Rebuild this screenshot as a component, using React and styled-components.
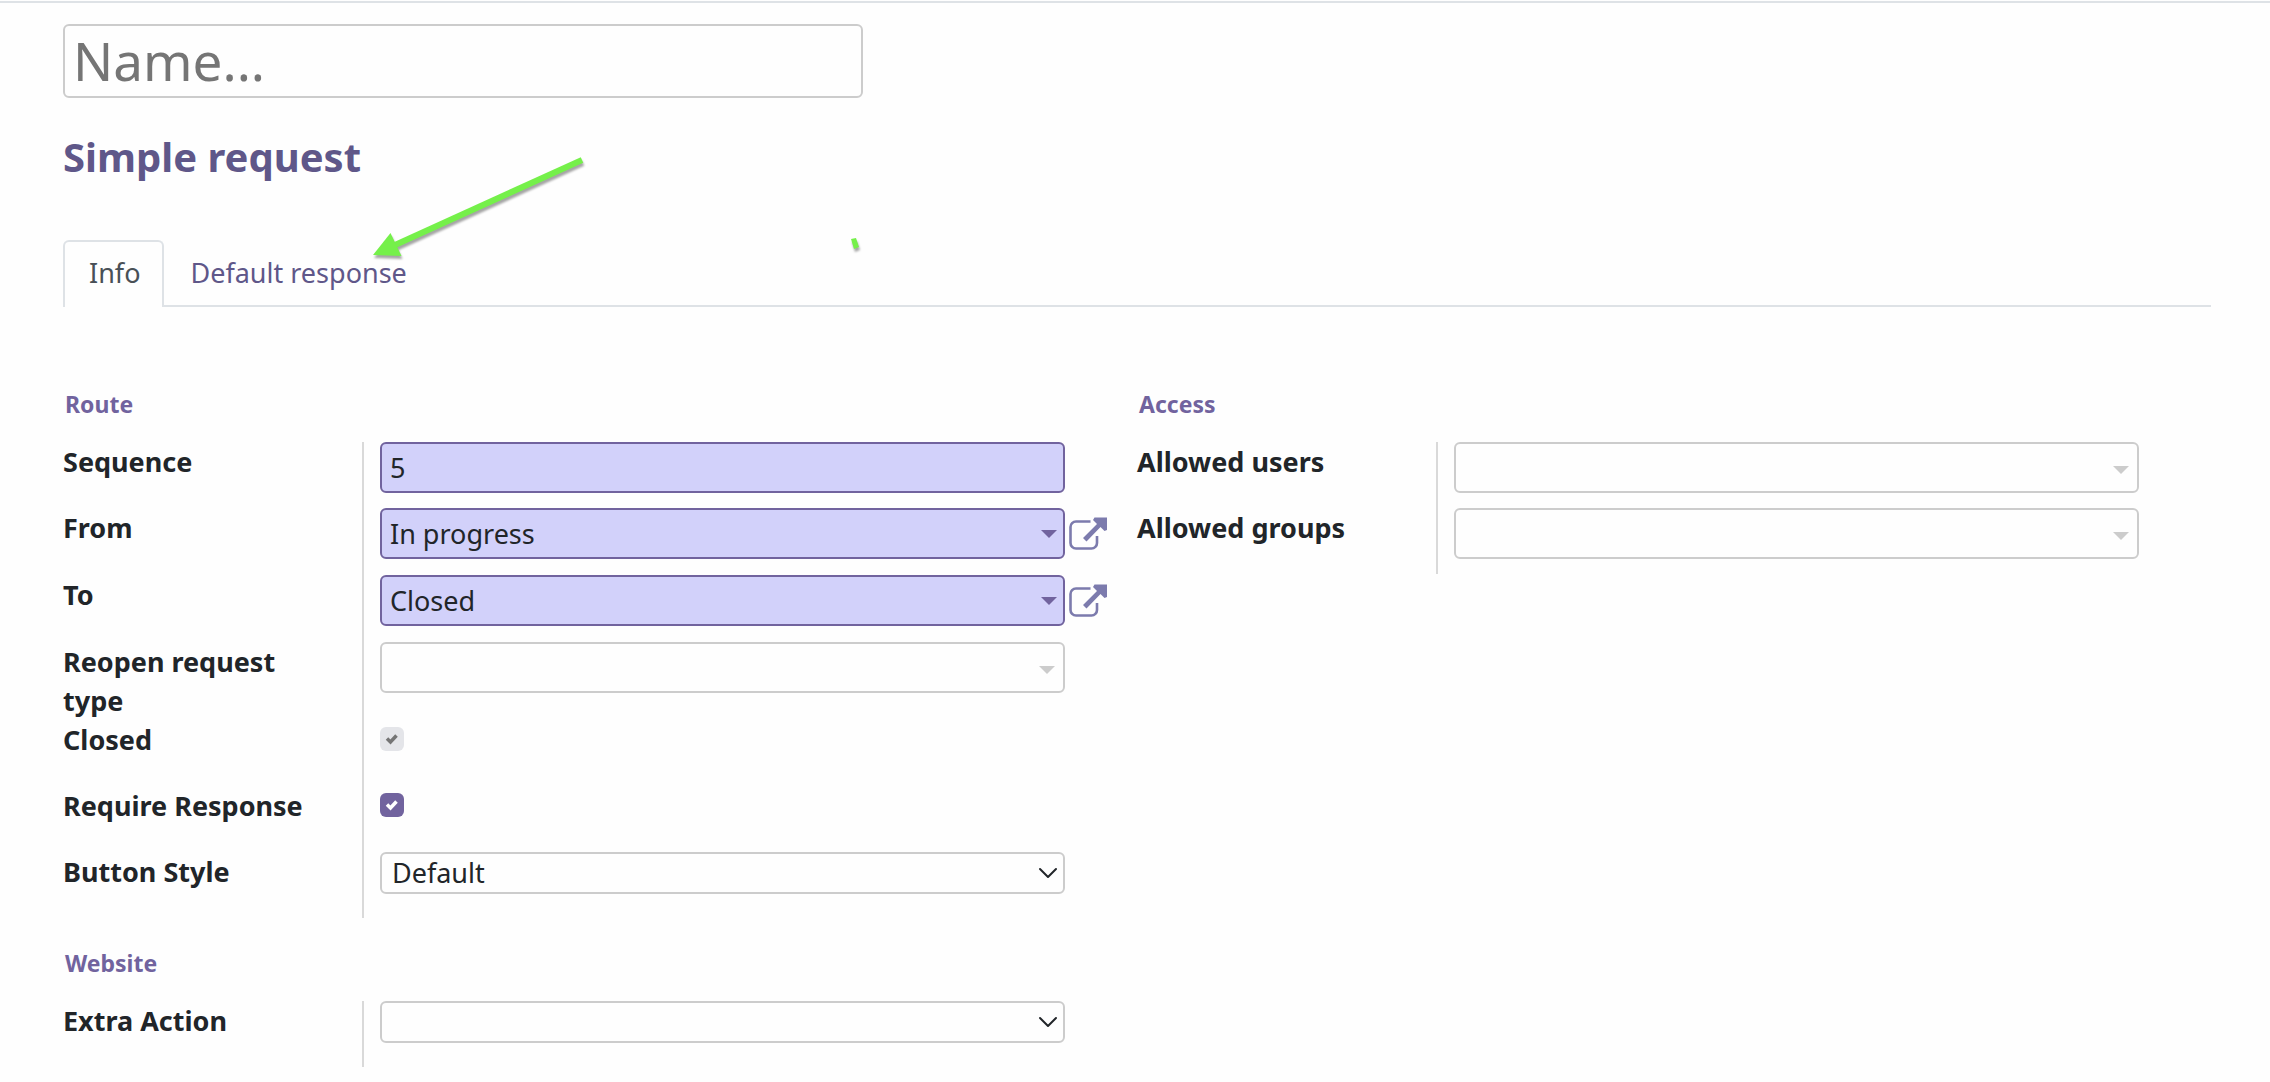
import React from "react";
import styled, { createGlobalStyle, css } from "styled-components";

const GlobalStyle = createGlobalStyle`
    body {
        margin: 0;
        padding-top: 1px;
        background: #fefefe;
        color: #212529;
        font-family: "Lucida Grande", "Noto Sans", "Open Sans", sans-serif;
        font-size: 27px;
        line-height: 39px;
    }

    *, *::before, *::after {
        box-sizing: border-box;
    }
`;

const Sheet = styled.main`
    position: relative;
    padding: 21px 59px 0 63px;
    border-top: 2px solid #dee2e6;
`;

const NameInput = styled.input`
    display: block;
    width: 800px;
    max-width: 100%;
    height: 74px;
    padding: 0 8px 2px;
    border: 2px solid #ccc;
    border-radius: 6px;
    background: #fefefe;
    color: #212529;
    font-family: inherit;
    font-size: 53px;

    &::placeholder {
        color: #757575;
        opacity: 1;
    }
`;

const Title = styled.h1`
    margin: 29px 0 53px;
    color: #5f5789;
    font-size: 40px;
    line-height: 60px;
    font-weight: bold;
`;

const Tabs = styled.nav`
    display: flex;
    border-bottom: 2px solid #dee2e6;
`;

const Tab = styled.a`
    height: 67px;
    margin-bottom: -2px;
    padding: 11px 23px 0 24px;
    border: 2px solid transparent;
    border-bottom: 0;
    border-radius: 6px 6px 0 0;
    color: #5f5789;
    text-decoration: none;

    ${({ $active }) => $active && css`
        padding-right: 22px;
        border-color: #dee2e6;
        background: #fefefe;
        color: #495057;
    `}
`;

const Columns = styled.div`
    display: grid;
    grid-template-columns: 1fr 1fr;
    padding-top: 78px;
`;

const Group = styled.section`
    & + & {
        margin-top: 26px;
    }
`;

const GroupTitle = styled.h2`
    margin: 0 0 18px;
    padding-left: 2px;
    color: #71639e;
    font-size: 23px;
    line-height: 39px;
    font-weight: bold;
`;

const Row = styled.div`
    display: grid;
    grid-template-columns: 299px 1fr;
`;

const Label = styled.label`
    padding-right: 40px;
    font-weight: bold;
`;

const Cell = styled.div`
    display: flex;
    align-items: flex-start;
    min-height: ${({ $linked }) => ($linked ? "67px" : "66px")};
    padding: 0 28px 15px 16px;
    border-left: 2px solid #d9d9d9;
`;

const Box = styled.div`
    position: relative;
    flex: 1;
    margin-right: ${({ $linked }) => ($linked ? "4px" : "44px")};
`;

const Field = styled.input`
    display: block;
    width: 100%;
    height: 51px;
    padding: 0 8px;
    border: 2px solid ${({ $required }) => ($required ? "#71639e" : "#ccc")};
    border-radius: 6px;
    background: ${({ $required }) => ($required ? "#d2d1fa" : "#fefefe")};
    color: #212529;
    font: inherit;
`;

const Caret = styled.span`
    position: absolute;
    top: ${({ $required }) => ($required ? "22px" : "24px")};
    right: ${({ $required }) => ($required ? "8px" : "10px")};
    border: 8px solid transparent;
    border-top-color: ${({ $required }) => ($required ? "#71639e" : "#ccc")};
    border-bottom: 0;
    pointer-events: none;
`;

const LinkButton = styled.button`
    width: 40px;
    height: 34px;
    margin-top: 9px;
    padding: 0;
    border: 0;
    background: none;
    color: #7c7bad;
    cursor: pointer;

    svg {
        display: block;
    }
`;

const Select = styled.select`
    display: block;
    width: 100%;
    height: 42px;
    padding: 0 10px;
    border: 2px solid #ccc;
    border-radius: 6px;
    background: #fefefe;
    color: #212529;
    font: inherit;
    line-height: 38px;
    appearance: none;
`;

const Chevron = styled.svg`
    position: absolute;
    top: 14px;
    right: 7px;
    pointer-events: none;
`;

const Check = styled.span`
    display: grid;
    margin-top: 7px;

    > * {
        grid-area: 1 / 1;
    }

    svg {
        pointer-events: none;
    }
`;

const CheckInput = styled.input`
    width: 24px;
    height: 24px;
    margin: 0;
    border-radius: 6px;
    background: #71639e;
    appearance: none;

    &:disabled {
        background: #e4e5e9;
    }

    & + svg {
        visibility: hidden;
        color: #fff;
    }

    &:checked + svg {
        visibility: visible;
    }

    &:disabled + svg {
        color: #757575;
    }
`;

const Annotation = styled.svg`
    position: absolute;
    top: 150px;
    left: 360px;
    pointer-events: none;
    filter: drop-shadow(1px 3px 1px rgba(0, 0, 0, 0.35));
`;

const TextField = ({ id, label, value }) => (
    <Row>
        <Label htmlFor={id}>{label}</Label>
        <Cell>
            <Box>
                <Field id={id} defaultValue={value} $required/>
            </Box>
        </Cell>
    </Row>
);

const RelationField = ({ id, label, value = "", required = false }) => (
    <Row>
        <Label htmlFor={id}>{label}</Label>
        <Cell $linked={required}>
            <Box $linked={required}>
                <Field id={id} defaultValue={value} $required={required}/>
                <Caret $required={required}/>
            </Box>
            {required && (
                <LinkButton type="button" aria-label={`Open ${label}`}>
                    <svg width="40" height="34" viewBox="0 0 40 34" fill="none">
                        <path
                            d="M21.5 4.5H7a5.5 5.5 0 0 0-5.5 5.5v16a5.5 5.5 0 0 0 5.5 5.5h15.5a5.5 5.5 0 0 0 5.5-5.5v-7"
                            stroke="currentColor"
                            strokeWidth="2.6"
                        />
                        <path d="M25.5 0.5h12.5v12.500l-2.5 1-4-4L17.5 24.5l-3.5-3.5L28 7l-4-4z" fill="currentColor"/>
                    </svg>
                </LinkButton>
            )}
        </Cell>
    </Row>
);

const CheckField = ({ id, label, disabled }) => (
    <Row>
        <Label htmlFor={id}>{label}</Label>
        <Cell>
            <Check>
                <CheckInput id={id} type="checkbox" defaultChecked disabled={disabled}/>
                <svg width="24" height="24" viewBox="0 0 24 24" fill="none">
                    <path d="M7 11.5l3.5 3.5L16.5 8.5" stroke="currentColor" strokeWidth="3.5"/>
                </svg>
            </Check>
        </Cell>
    </Row>
);

const SelectField = ({ id, label, options }) => (
    <Row>
        <Label htmlFor={id}>{label}</Label>
        <Cell>
            <Box>
                <Select id={id}>
                    {options.map((option) => <option key={option}>{option}</option>)}
                </Select>
                <Chevron width="20" height="14" viewBox="0 0 20 14" fill="none">
                    <path d="M2 3l8 8 8-8" stroke="#212529" strokeWidth="2" strokeLinecap="round" strokeLinejoin="round"/>
                </Chevron>
            </Box>
        </Cell>
    </Row>
);

const App = () => (
    <>
        <GlobalStyle/>
        <Sheet>
            <NameInput placeholder="Name..." aria-label="Name"/>
            <Title>Simple request</Title>
            <Tabs>
                <Tab href="#info" $active>Info</Tab>
                <Tab href="#response">Default response</Tab>
            </Tabs>
            <Columns>
                <div>
                    <Group>
                        <GroupTitle>Route</GroupTitle>
                        <TextField id="sequence" label="Sequence" value="5"/>
                        <RelationField id="from" label="From" value="In progress" required/>
                        <RelationField id="to" label="To" value="Closed" required/>
                        <RelationField id="reopen" label="Reopen request type"/>
                        <CheckField id="closed" label="Closed" disabled/>
                        <CheckField id="require" label="Require Response"/>
                        <SelectField id="style" label="Button Style" options={["Default"]}/>
                    </Group>
                    <Group>
                        <GroupTitle>Website</GroupTitle>
                        <SelectField id="action" label="Extra Action" options={[""]}/>
                    </Group>
                </div>
                <Group>
                    <GroupTitle>Access</GroupTitle>
                    <RelationField id="users" label="Allowed users"/>
                    <RelationField id="groups" label="Allowed groups"/>
                </Group>
            </Columns>
            <Annotation width="510" height="120" viewBox="360 153 510 120">
                <path d="M395 245L582 160" stroke="#75f04a" strokeWidth="6"/>
                <path d="M373 255l17.5-22 11 23z" fill="#75f04a"/>
                <path d="M851 239l5-1 3 9-5 2z" fill="#75f04a"/>
            </Annotation>
        </Sheet>
    </>
);

export default App;
